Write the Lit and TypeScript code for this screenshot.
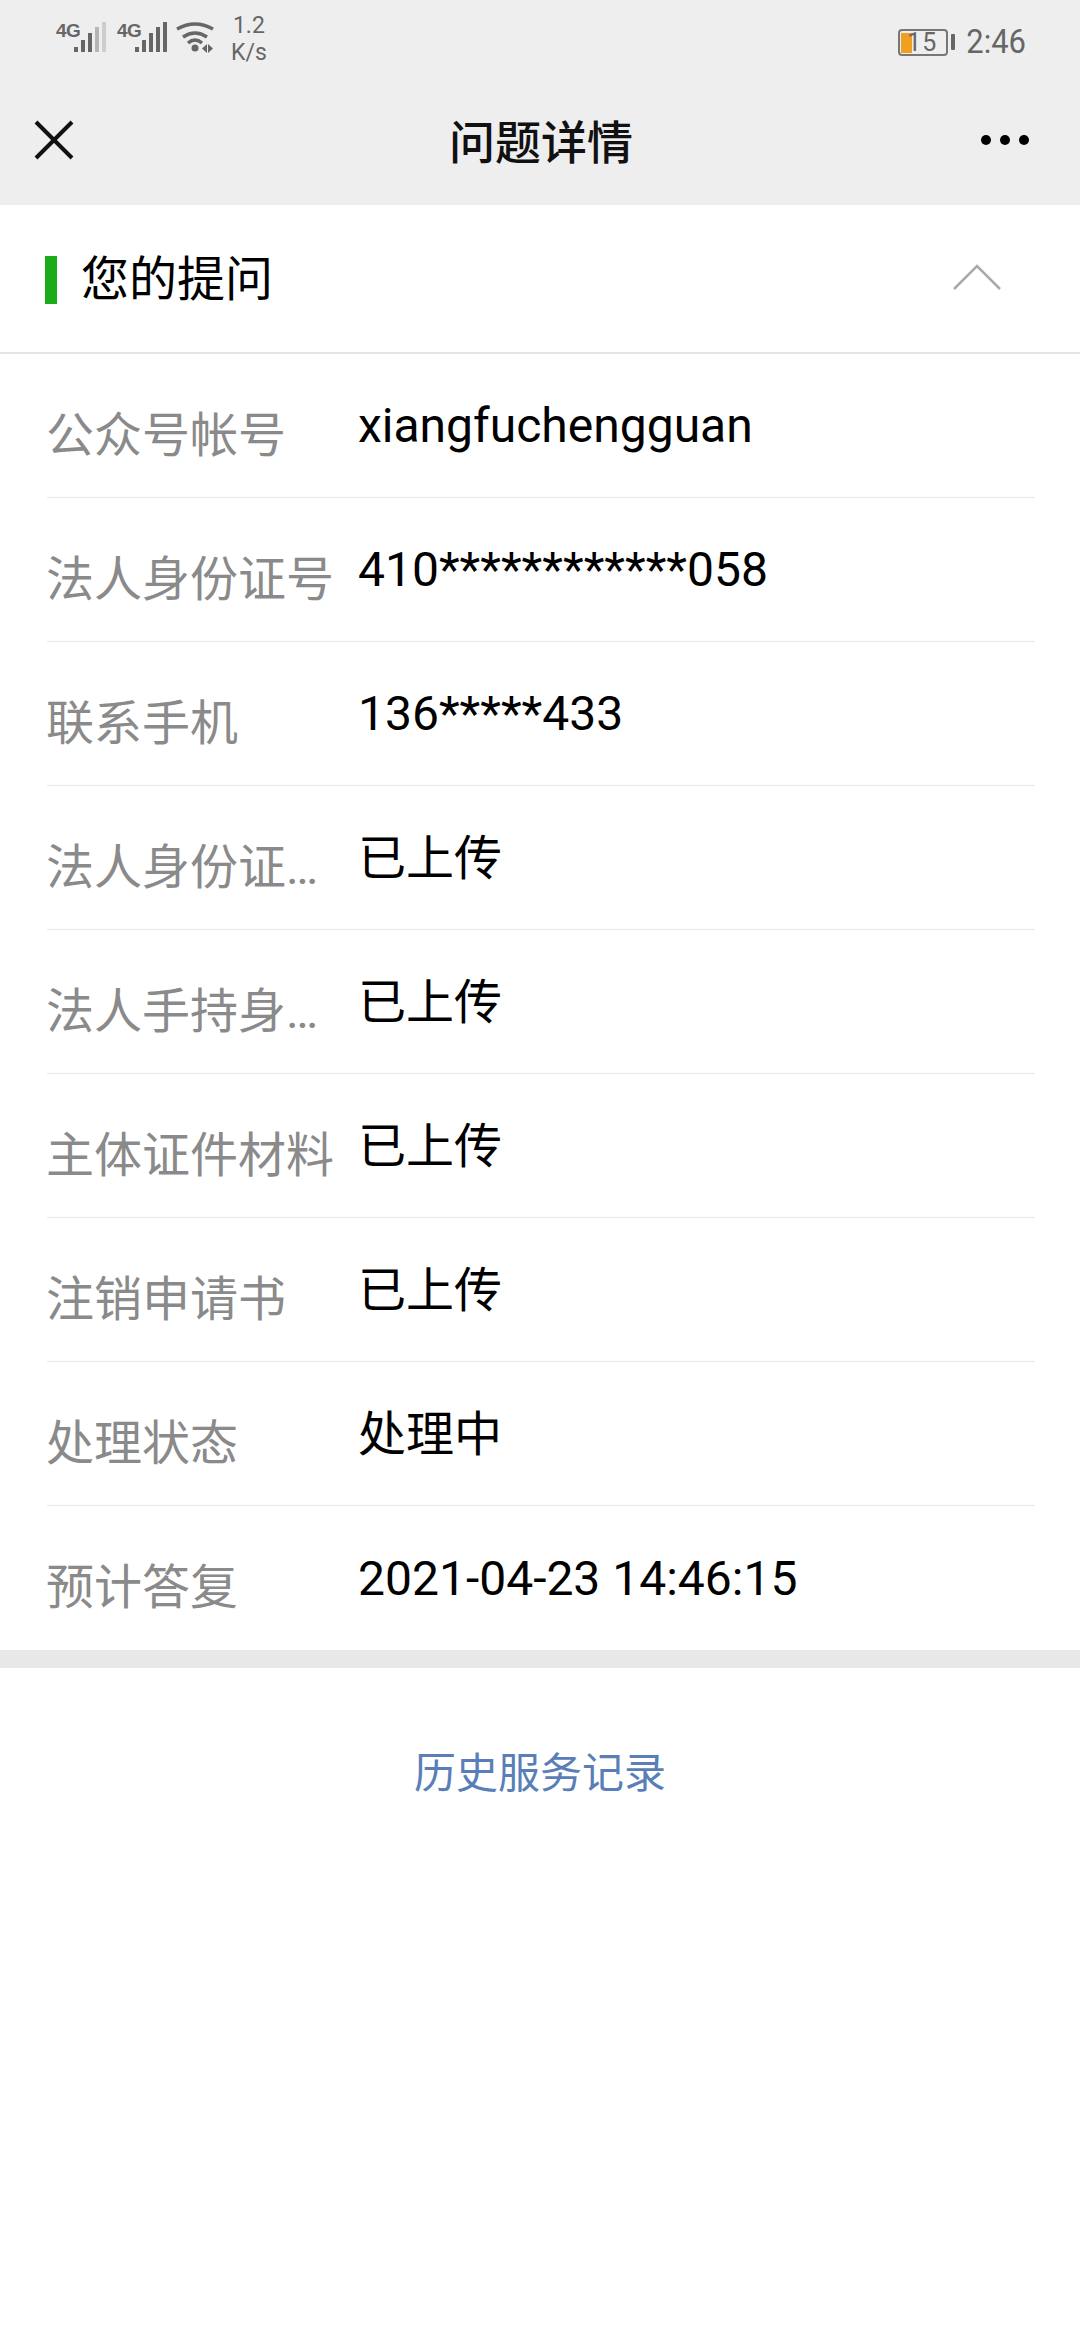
import { LitElement, css, html, svg } from 'lit';
import { customElement } from 'lit/decorators.js';

const ROWS: [string, string][] = [
  ['公众号帐号', 'xiangfuchengguan'],
  ['法人身份证号', '410************058'],
  ['联系手机', '136*****433'],
  ['法人身份证…', '已上传'],
  ['法人手持身…', '已上传'],
  ['主体证件材料', '已上传'],
  ['注销申请书', '已上传'],
  ['处理状态', '处理中'],
  ['预计答复', '2021-04-23 14:46:15'],
];

const signal = (faded: boolean) => svg`
  <rect x="18" y="25" width="4" height="5" fill="#666"/>
  <rect x="25" y="18" width="4" height="12" fill="#666"/>
  <rect x="32" y="11" width="4" height="19" fill="#666"/>
  <rect x="39" y="5" width="4" height="25" fill="${faded ? '#b5b5b5' : '#666'}"/>
  <rect x="46" y="0" width="4" height="30" fill="${faded ? '#cdcdcd' : '#666'}"/>
`;

@customElement('app-root')
export class AppRoot extends LitElement {
  static styles = css`
    :host {
      display: block;
      width: 1080px;
      height: 2340px;
      background: #fff;
      font-family: Roboto, 'Noto Sans CJK SC', sans-serif;
      overflow: hidden;
    }
    .top {
      height: 205px;
      background: #eeeeee;
    }
    .status {
      height: 70px;
      display: flex;
      align-items: flex-start;
      padding: 12px 54px 0 56px;
      box-sizing: border-box;
      color: #666;
    }
    .net {
      display: flex;
      align-items: flex-start;
      margin-top: 10px;
    }
    .sim {
      position: relative;
      width: 61px;
      height: 33px;
    }
    .sim span {
      position: absolute;
      left: 0;
      top: -2px;
      font-size: 19px;
      font-weight: 700;
      line-height: 22px;
      font-family: 'Liberation Sans Narrow', 'Liberation Sans', sans-serif;
      letter-spacing: -0.5px;
    }
    .sim svg {
      position: absolute;
      left: 0;
      top: 0;
    }
    .wifi {
      margin-left: -2px;
    }
    .speed {
      margin-left: 17px;
      font-size: 23px;
      line-height: 27px;
      text-align: center;
    }
    .right {
      margin-left: auto;
      display: flex;
      align-items: center;
      margin-top: 12px;
    }
    .battery {
      position: relative;
      width: 46px;
      height: 23px;
      border: 2px solid #777;
      border-radius: 4px;
      font-size: 25px;
      line-height: 23px;
      color: #666;
      text-align: right;
    }
    .fill {
      position: absolute;
      left: 1px;
      top: 2px;
      width: 11px;
      height: 20px;
      background: #f0a020;
    }
    .pct {
      position: relative;
      display: block;
      padding-right: 9px;
      letter-spacing: 1px;
    }
    .cap {
      width: 4px;
      height: 16px;
      margin-left: 3px;
      background: #666;
      border-radius: 1px;
    }
    .time {
      margin-left: 11px;
      font-size: 31px;
      line-height: 36px;
      transform: scaleY(1.1);
    }
    .nav {
      height: 135px;
      position: relative;
      display: flex;
      align-items: center;
      justify-content: center;
      padding: 2px 0 0 2px;
      box-sizing: border-box;
    }
    .title {
      font-size: 46px;
      font-weight: 500;
      color: #111;
    }
    .close {
      position: absolute;
      left: 34px;
      top: 50px;
    }
    .more {
      position: absolute;
      left: 981px;
      top: 65px;
      display: flex;
      gap: 9px;
    }
    .more i {
      width: 10px;
      height: 10px;
      border-radius: 50%;
      background: #000;
    }
    .head {
      height: 149px;
      display: flex;
      align-items: center;
      padding: 0 78px 0 45px;
      border-bottom: 2px solid #e3e3e3;
      box-sizing: border-box;
    }
    .mark {
      width: 12px;
      height: 48px;
      margin-top: 2px;
      background: #1aad19;
    }
    .head-text {
      margin: 0 0 8px 24px;
      font-size: 48px;
      color: #000;
    }
    .chevron {
      margin: 0 0 3px auto;
    }
    .rows {
      padding-left: 47px;
    }
    .row {
      height: 144px;
      display: grid;
      grid-template-columns: 311px 1fr;
      align-items: center;
      margin-right: 45px;
      border-bottom: 1.5px solid #e8e8e8;
      box-sizing: border-box;
    }
    .row:last-child {
      border-bottom: none;
    }
    .label {
      font-size: 48px;
      color: #8a8a8a;
      margin-left: -1px;
      padding-top: 10px;
      white-space: nowrap;
    }
    .value {
      font-size: 48px;
      color: #000;
      white-space: nowrap;
    }
    .value.cjk {
      padding-bottom: 8px;
    }
    .gap {
      height: 18px;
      background: #e8e8e8;
    }
    .link {
      margin-top: 71px;
      text-align: center;
      font-size: 42px;
      color: #5a7fb8;
    }
  `;

  protected render() {
    return html`
      <div class="top">
        <div class="status">
          <div class="net">
            <div class="sim">
              <span>4G</span>
              <svg width="52" height="33" viewBox="0 0 52 33">${signal(true)}</svg>
            </div>
            <div class="sim">
              <span>4G</span>
              <svg width="52" height="33" viewBox="0 0 52 33">${signal(false)}</svg>
            </div>
            <svg class="wifi" width="38" height="34" viewBox="0 0 38 34" fill="none" stroke="#666" stroke-width="3.5">
              <path d="M1 7 Q19 -3 37 7" />
              <path d="M7 15 Q19 7 31 15" />
              <path d="M12 21 Q19 15 26 21" />
              <circle cx="19" cy="26" r="3.5" fill="#666" stroke="none" />
              <path d="M31 22 L26 26.5 L31 31 Z M32 22 L37 26.5 L32 31 Z" fill="#666" stroke="none" />
            </svg>
          </div>
          <div class="speed">1.2<br />K/s</div>
          <div class="right">
            <div class="battery"><div class="fill"></div><span class="pct">15</span></div>
            <div class="cap"></div>
            <div class="time">2:46</div>
          </div>
        </div>
        <div class="nav">
          <svg class="close" width="40" height="40" viewBox="0 0 40 40" stroke="#111" stroke-width="4">
            <path d="M2 2 L38 38 M38 2 L2 38" />
          </svg>
          <div class="title">问题详情</div>
          <div class="more"><i></i><i></i><i></i></div>
        </div>
      </div>
      <div class="head">
        <div class="mark"></div>
        <div class="head-text">您的提问</div>
        <svg class="chevron" width="50" height="28" viewBox="0 0 50 28" fill="none" stroke="#aaa" stroke-width="2.5">
          <path d="M2 26 L25 3 L48 26" />
        </svg>
      </div>
      <div class="rows">
        ${ROWS.map(
          ([label, value]) => html`
            <div class="row">
              <div class="label">${label}</div>
              <div class="value ${/^[\x00-\x7f]+$/.test(value) ? '' : 'cjk'}">${value}</div>
            </div>
          `
        )}
      </div>
      <div class="gap"></div>
      <div class="link">历史服务记录</div>
    `;
  }
}
